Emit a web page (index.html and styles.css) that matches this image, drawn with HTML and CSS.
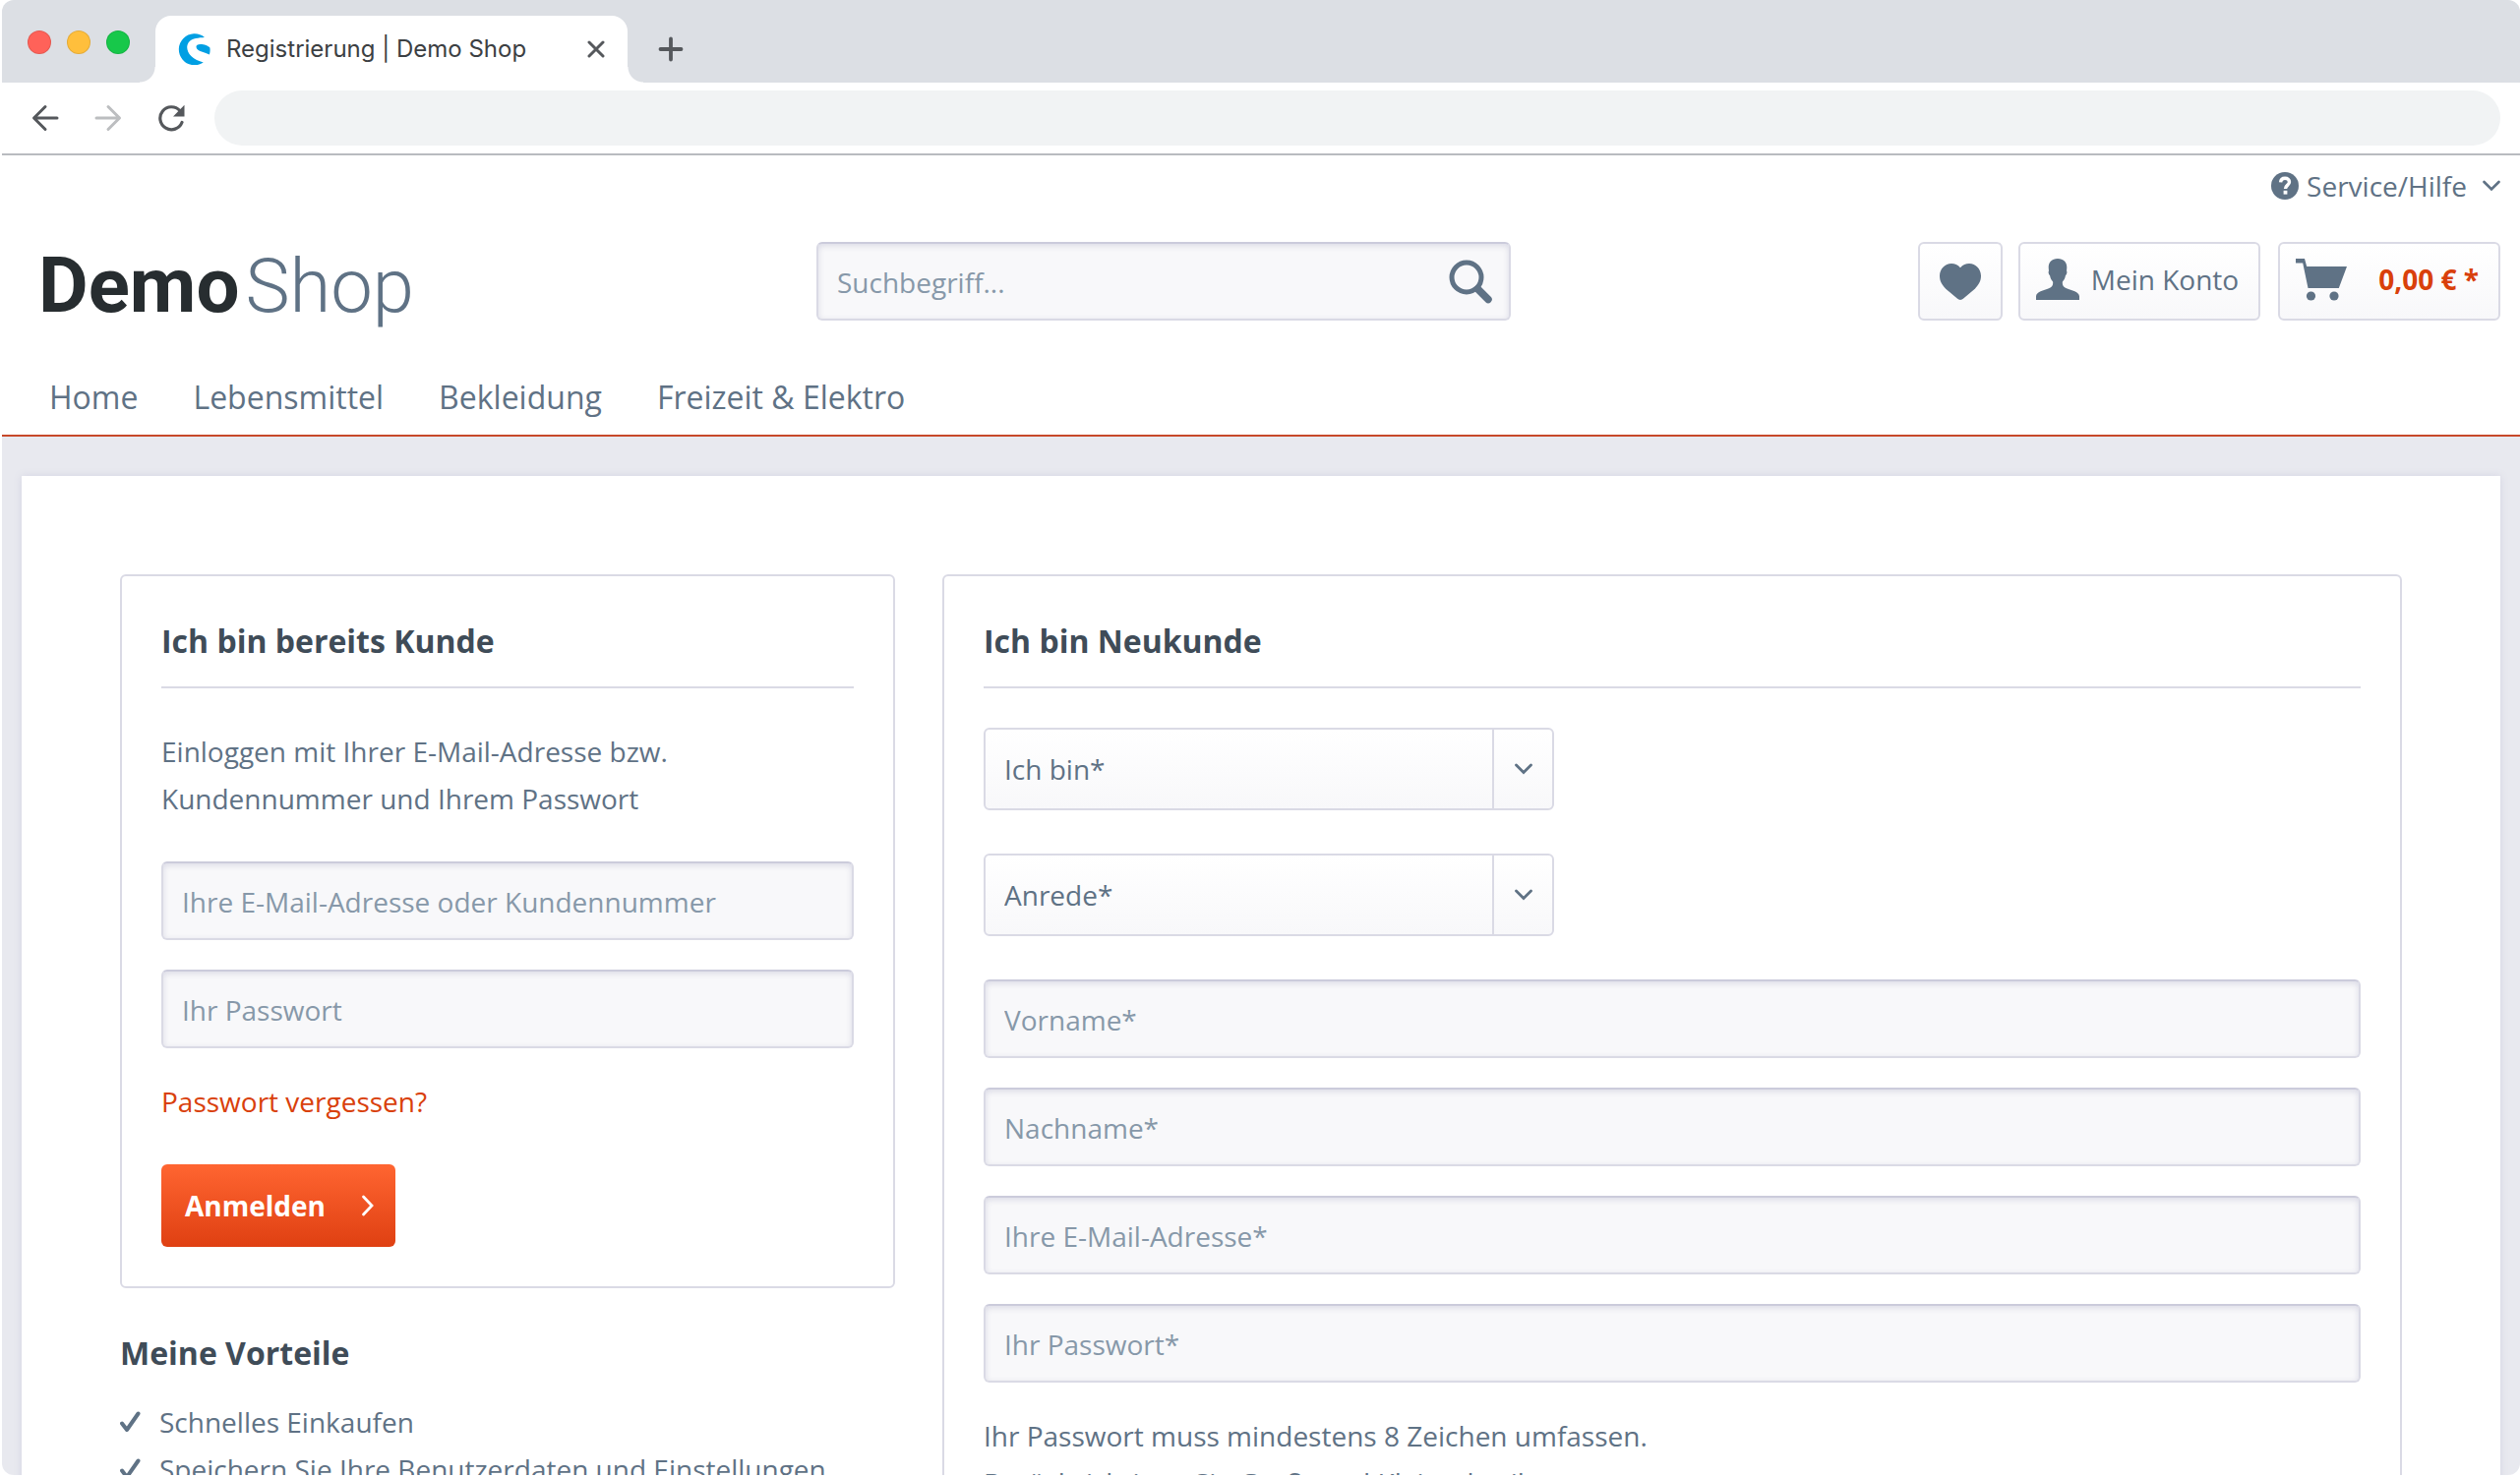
FILE: index.html
```html
<!DOCTYPE html>
<html lang="de">
<head>
<meta charset="utf-8">
<title>Registrierung | Demo Shop</title>
<link rel="stylesheet" href="styles.css">
</head>
<body>
<div class="window">
  <div class="tabbar">
    <div class="lights"><span class="light red"></span><span class="light yellow"></span><span class="light green"></span></div>
    <div class="tab">
      <svg class="favicon" viewBox="0 0 32 32" aria-hidden="true"><path fill="#009fe3" d="M26.500 3.900A16 16 0 1 0 25.300 29.500c-5-1.500-9-3-12.500-6.500C8.500 18.700 7.200 12.500 10.800 8.400 14 4.800 20.500 4.300 26.500 3.900z"/><path fill="#009fe3" d="M31.900 14.500c-1.500-2-6-3.600-9.600-3.600-2.800 0-4.600 1.300-4.300 3 .5 2.500 3.200 3.600 6.200 4.800 2.200.8 4.800 1.800 7.200 2.900.7-2.300.9-4.800.5-7.100z"/></svg>
      <span class="tab-title">Registrierung | Demo Shop</span>
      <button class="icon-btn" aria-label="Tab schließen"><svg width="18" height="18" viewBox="0 0 18 18"><path d="M2 2l14 14M16 2L2 16" stroke="#55585c" stroke-width="3" stroke-linecap="round"/></svg></button>
    </div>
    <button class="icon-btn new-tab" aria-label="Neuer Tab"><svg width="26" height="26" viewBox="0 0 26 26"><path d="M13 2.500v21M2.500 13h21" stroke="#55585c" stroke-width="3.800" stroke-linecap="round"/></svg></button>
  </div>
  <div class="toolbar">
    <button class="icon-btn" aria-label="Zurück"><svg width="28" height="28" viewBox="0 0 28 28" fill="none" stroke="#55585c" stroke-width="3" stroke-linecap="round" stroke-linejoin="round"><path d="M26 14H3M14 2.500L2.500 14 14 25.500"/></svg></button>
    <button class="icon-btn" aria-label="Vorwärts"><svg width="28" height="28" viewBox="0 0 28 28" fill="none" stroke="#bcbec0" stroke-width="3" stroke-linecap="round" stroke-linejoin="round"><path d="M2 14h23M14 2.500L25.500 14 14 25.500"/></svg></button>
    <button class="icon-btn" aria-label="Neu laden"><svg width="28" height="28" viewBox="0 0 28 28" fill="none"><path d="M22.800 6.500A11.500 11.500 0 1 0 25 18.500" stroke="#55585c" stroke-width="3.200" stroke-linecap="round"/><path d="M27.500.800v11.700H16z" fill="#55585c"/></svg></button>
    <input class="address" type="text" aria-label="Adresse">
  </div>
  <div class="page">
    <header class="header">
      <div class="topbar">
        <a class="service" href="#">
          <svg width="28" height="28" viewBox="0 0 28 28" aria-hidden="true"><circle cx="14" cy="14" r="14" fill="#5f7285"/><path d="M9.600 10.400c.2-2.700 2-4.100 4.500-4.100 2.600 0 4.400 1.500 4.400 3.700 0 3.300-4 3.500-4 6.900" fill="none" stroke="#fff" stroke-width="3.400"/><rect x="12.600" y="18.800" width="3.800" height="3.800" fill="#fff"/></svg>
          <span>Service/Hilfe</span>
          <svg class="service-arrow" width="18" height="12" viewBox="0 0 18 12" aria-hidden="true"><path d="M1.500 2L9 9.500 16.500 2" fill="none" stroke="#5f7285" stroke-width="2.600" stroke-linecap="round"/></svg>
        </a>
      </div>
      <div class="main-row">
        <a class="logo" href="#"><b>Demo</b><span>Shop</span></a>
        <form class="search">
          <input class="field" type="search" placeholder="Suchbegriff..." aria-label="Suchbegriff">
          <button class="icon-btn search-btn" type="button" aria-label="Suchen"><svg width="46" height="46" viewBox="0 0 46 46" fill="none" stroke="#5f7285"><circle cx="19" cy="19" r="15" stroke-width="5"/><path d="M30.500 31L41 41.500" stroke-width="7.500" stroke-linecap="round"/></svg></button>
        </form>
        <div class="actions">
          <button class="action heart" aria-label="Merkzettel"><svg width="42" height="37" viewBox="0 0 42 37"><path fill="#5f7285" d="M21 4.300C23.500 1.300 26.600 0 30 0c6.800 0 12 5.600 12 12.500 0 5.700-2.600 9.300-6.200 13.200L24.200 35.600c-1.800 1.700-4.600 1.700-6.400 0L6.200 25.700C2.600 21.800 0 18.200 0 12.500 0 5.600 5.200 0 12 0c3.400 0 6.500 1.300 9 4.300z"/></svg></button>
          <button class="action account"><svg width="44" height="42" viewBox="0 0 44 42"><path fill="#5f7285" d="M22 0c6 0 9.300 3.600 9.300 9 0 1.300-.2 2.500-.3 3.400.8.900.3 3.800-1 4.600-.6 3.200-1.800 5-3.100 6.600-.4 3 .5 5.200 4.100 6.700C36 32.300 44 33.500 44 38.600V42H0v-3.400c0-5.100 8-6.300 13-8.300 3.600-1.500 4.500-3.700 4.100-6.700-1.300-1.600-2.500-3.400-3.100-6.600-1.300-.8-1.800-3.700-1-4.600-.1-.9-.3-2.100-.3-3.400 0-5.400 3.300-9 9.300-9z"/></svg><span>Mein Konto</span></button>
          <button class="action cart"><svg width="52" height="43" viewBox="0 0 52 43"><path fill="#5f7285" d="M0 0h9l2.200 8H52l-8.200 22H12.500L7.200 4.500H0z"/><circle cx="15.500" cy="38" r="4.600" fill="#5f7285"/><circle cx="39" cy="38" r="4.600" fill="#5f7285"/></svg><b>0,00 € *</b></button>
        </div>
      </div>
      <nav class="nav"><a href="#">Home</a><a href="#">Lebensmittel</a><a href="#">Bekleidung</a><a href="#">Freizeit &amp; Elektro</a></nav>
    </header>
    <main class="content">
      <div class="left">
        <form class="card login">
          <h2>Ich bin bereits Kunde</h2>
          <p>Einloggen mit Ihrer E-Mail-Adresse bzw.<br>Kundennummer und Ihrem Passwort</p>
          <div class="stack">
            <input class="field" type="email" placeholder="Ihre E-Mail-Adresse oder Kundennummer" aria-label="Ihre E-Mail-Adresse oder Kundennummer">
            <input class="field" type="password" placeholder="Ihr Passwort" aria-label="Ihr Passwort">
            <a class="forgot" href="#">Passwort vergessen?</a>
          </div>
          <button class="submit" type="button"><span>Anmelden</span><svg width="14" height="22" viewBox="0 0 14 22" aria-hidden="true"><path d="M2.500 2l8.500 9-8.500 9" fill="none" stroke="#fff" stroke-width="2.800" stroke-linecap="round"/></svg></button>
        </form>
        <section class="benefits">
          <h2>Meine Vorteile</h2>
          <ul>
            <li><svg width="21" height="22" viewBox="0 0 21 22" aria-hidden="true"><path d="M2 12.500l5 6.500L18.500 2.500" fill="none" stroke="#5f7285" stroke-width="4" stroke-linecap="round" stroke-linejoin="round"/></svg>Schnelles Einkaufen</li>
            <li><svg width="21" height="22" viewBox="0 0 21 22" aria-hidden="true"><path d="M2 12.500l5 6.500L18.500 2.500" fill="none" stroke="#5f7285" stroke-width="4" stroke-linecap="round" stroke-linejoin="round"/></svg>Speichern Sie Ihre Benutzerdaten und Einstellungen</li>
          </ul>
        </section>
      </div>
      <form class="card register">
        <h2>Ich bin Neukunde</h2>
        <div class="selects">
          <div class="select"><select aria-label="Ich bin"><option>Ich bin*</option></select><span class="arrow"><svg width="18" height="12" viewBox="0 0 18 12"><path d="M1.500 2L9 9.500 16.500 2" fill="none" stroke="#5f7285" stroke-width="2.800" stroke-linecap="round"/></svg></span></div>
          <div class="select"><select aria-label="Anrede"><option>Anrede*</option></select><span class="arrow"><svg width="18" height="12" viewBox="0 0 18 12"><path d="M1.500 2L9 9.500 16.500 2" fill="none" stroke="#5f7285" stroke-width="2.800" stroke-linecap="round"/></svg></span></div>
        </div>
        <div class="stack">
          <input class="field" type="text" placeholder="Vorname*" aria-label="Vorname">
          <input class="field" type="text" placeholder="Nachname*" aria-label="Nachname">
          <input class="field" type="email" placeholder="Ihre E-Mail-Adresse*" aria-label="Ihre E-Mail-Adresse">
          <input class="field" type="password" placeholder="Ihr Passwort*" aria-label="Ihr Passwort">
          <p>Ihr Passwort muss mindestens 8 Zeichen umfassen.<br>Berücksichtigen Sie Groß- und Kleinschreibung.</p>
        </div>
      </form>
    </main>
  </div>
</div>
</body>
</html>
```
FILE: styles.css
```css
* { box-sizing: border-box; }

body {
  margin: 0;
  height: 100vh;
  overflow: hidden;
  padding: 0 0 2px 2px;
  background: #fff;
  color: #5f7285;
  font: 28px/48px "Open Sans", "Noto Sans", sans-serif;
}

h2, p, ul { margin: 0; padding: 0; }
a { color: inherit; text-decoration: none; }
svg { display: block; flex: none; }
button, input, select { font: inherit; color: inherit; margin: 0; }

.window {
  display: flex;
  flex-direction: column;
  height: 100%;
  overflow: hidden;
  border-radius: 12px;
}

.icon-btn {
  display: flex;
  padding: 0;
  border: 0;
  background: none;
}

/* Browser frame */
.tabbar {
  display: flex;
  flex: none;
  align-items: center;
  height: 84px;
  padding: 16px 26px 0;
  background: #dcdfe4;
}

.lights { display: flex; gap: 16px; margin-top: -14px; }
.light { width: 24px; height: 24px; border-radius: 50%; border: 1px solid rgba(0, 0, 0, .1); }
.red { background: #ff6259; }
.yellow { background: #ffbf3c; }
.green { background: #17c84a; }

.tab {
  position: relative;
  display: flex;
  align-items: center;
  width: 480px;
  height: 68px;
  margin-left: 26px;
  padding: 0 23px;
  border-radius: 16px 16px 0 0;
  background: #fff;
}
.tab::before, .tab::after {
  content: "";
  position: absolute;
  bottom: 0;
  width: 16px;
  height: 16px;
}
.tab::before { left: -16px; background: radial-gradient(circle at 0 0, transparent 15px, #fff 16px); }
.tab::after { right: -16px; background: radial-gradient(circle at 100% 0, transparent 15px, #fff 16px); }
.favicon { width: 33px; height: 32px; }
.tab-title { flex: 1; margin-left: 16px; font: 24px/32px Inter, sans-serif; color: #3c4043; white-space: nowrap; }
.new-tab { margin-left: 31px; }

.toolbar {
  display: flex;
  flex: none;
  align-items: center;
  gap: 36px;
  height: 74px;
  padding: 0 20px 0 30px;
  border-bottom: 2px solid #b9bbc0;
}
.address {
  flex: 1;
  height: 56px;
  margin-left: -6px;
  padding: 0 28px;
  border: 0;
  border-radius: 28px;
  background: #f1f3f4;
}

/* Shop header */
.page { flex: 1; min-height: 0; overflow: hidden; background: #e8e9ef; }
.header { padding: 8px 20px 0; background: #fff; border-bottom: 2px solid #c7492a; }
.topbar { display: flex; justify-content: flex-end; margin-bottom: 34px; }
.service { display: flex; align-items: center; gap: 8px; line-height: 46px; }
.service-arrow { margin-left: 8px; }

.main-row { display: grid; grid-template-columns: 808fr 706fr 1006fr; align-items: start; }
.logo {
  display: flex;
  align-items: baseline;
  gap: 6px;
  padding-left: 17px;
  font: 76px/90px Roboto, sans-serif;
  color: #5f7285;
}
.logo b { font-size: 78px; font-weight: 700; color: #272d30; }
.logo span { font-weight: 300; }

.search { position: relative; }
.search-btn { position: absolute; right: 18px; top: 17px; }

.field {
  display: block;
  width: 100%;
  height: 80px;
  padding: 2px 19px 0;
  border: 2px solid #dadae5;
  border-top-color: #cbcbdb;
  border-radius: 6px;
  outline: 0;
  background: #f8f8fa;
  box-shadow: inset 0 2px 6px #dadae5;
  appearance: none;
}
.field::placeholder { color: #8798a9; opacity: 1; }

.actions { display: flex; justify-content: flex-end; }
.action {
  display: flex;
  align-items: center;
  height: 80px;
  padding: 0 20px 4px 16px;
  border: 2px solid #dadae5;
  border-radius: 6px;
  background: linear-gradient(#fff, #f8f8fa);
  white-space: nowrap;
}
.heart { padding: 0 20px; }
.account { gap: 12px; margin-left: 16px; }
.cart { gap: 32px; margin-left: 18px; color: #d9400b; }

.nav {
  display: flex;
  gap: 56px;
  margin-top: 44px;
  padding: 0 28px 14px;
  font-size: 32px;
}

/* Registration content */
.content {
  display: grid;
  grid-template-columns: minmax(0, 788fr) minmax(0, 1484fr);
  gap: 48px;
  margin: 40px 20px 0;
  padding: 100px;
  background: #fff;
  box-shadow: 0 0 8px #d4d4e2;
}

.card { border: 2px solid #dadae5; border-radius: 6px; padding: 40px; }
h2 { font-size: 32px; line-height: 52px; color: #3f4c58; }
.card h2 { margin-bottom: 40px; padding-bottom: 20px; border-bottom: 2px solid #dadae5; }
.stack { display: flex; flex-direction: column; gap: 30px; align-items: flex-start; }

.login p { margin-bottom: 40px; }
.forgot { color: #d9400b; }
.submit {
  display: flex;
  align-items: center;
  gap: 36px;
  height: 84px;
  margin-top: 40px;
  padding: 0 21px 0 24px;
  border: 0;
  border-radius: 6px;
  background: linear-gradient(#ff6531, #df4012);
  color: #fff;
  font-weight: 700;
}

.benefits { margin-top: 40px; }
.benefits ul { margin-top: 20px; list-style: none; }
.benefits li { display: flex; align-items: center; gap: 19px; white-space: nowrap; }

.selects { display: grid; gap: 44px; width: 580px; max-width: 100%; margin-bottom: 44px; }
.select { position: relative; }
.select select {
  display: block;
  width: 100%;
  height: 84px;
  padding: 0 80px 0 19px;
  border: 2px solid #dadae5;
  border-radius: 6px;
  background: linear-gradient(#fff, #f8f8fa);
  appearance: none;
}
.arrow {
  position: absolute;
  inset: 2px 2px 2px auto;
  display: flex;
  align-items: center;
  justify-content: center;
  width: 61px;
  border-left: 2px solid #dadae5;
  pointer-events: none;
}
```
